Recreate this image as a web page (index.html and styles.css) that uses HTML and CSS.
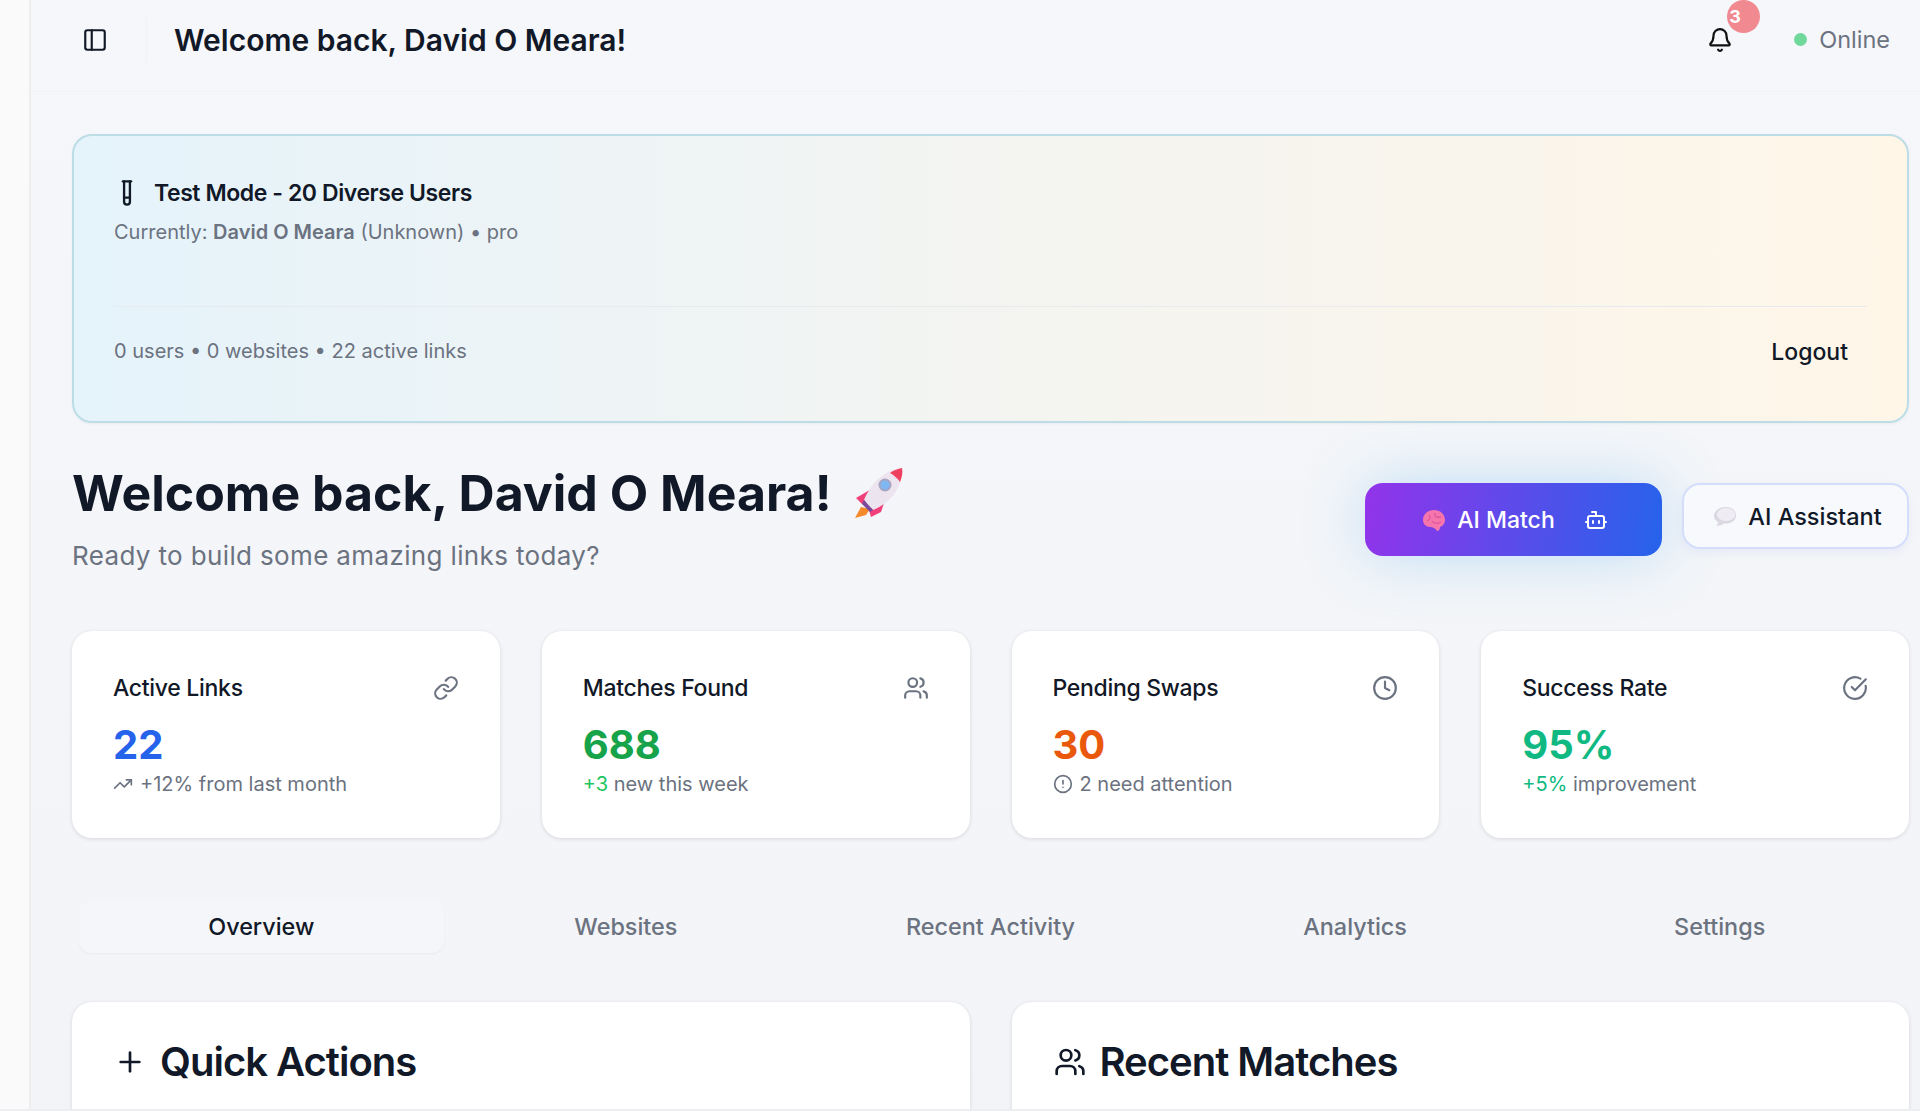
FILE: index.html
```html
<!DOCTYPE html>
<html lang="en">
<head>
    <meta charset="UTF-8">
    <meta name="viewport" content="width=device-width, initial-scale=1.0">
    <title>Dashboard</title>
    <link rel="stylesheet" href="styles.css">
</head>
<body>

    <div class="app">
        <div class="sidebar"></div>

        <div class="main">
            <div class="topbar">
                <svg class="icon toggle-icon" viewBox="0 0 24 24"><rect x="3" y="3" width="18" height="18" rx="2"/><path d="M9 3v18"/></svg>
                <div class="topbar-divider"></div>
                <div class="topbar-title">Welcome back, David O Meara!</div>
                <div class="bell">
                    <svg class="icon bell-icon" viewBox="0 0 24 24"><path d="M10.268 21a2 2 0 0 0 3.464 0"/><path d="M3.262 15.326A1 1 0 0 0 4 17h16a1 1 0 0 0 .74-1.673C19.41 13.956 18 12.499 18 8A6 6 0 0 0 6 8c0 4.499-1.411 5.956-2.738 7.326"/></svg>
                    <span class="bell-badge">3</span>
                </div>
                <div class="status">
                    <span class="status-dot"></span>
                    <span>Online</span>
                </div>
            </div>

            <div class="content">
                <div class="test-banner">
                    <div class="test-title">
                        <svg class="icon tube-icon" viewBox="0 0 24 24"><path d="M14.5 2v17.5c0 1.4-1.1 2.5-2.5 2.5c-1.4 0-2.5-1.1-2.5-2.5V2"/><path d="M8.5 2h7"/><path d="M14.5 16h-5"/></svg>
                        <span>Test Mode - 20 Diverse Users</span>
                    </div>
                    <div class="test-user">Currently: <strong>David O Meara</strong> (Unknown) • pro</div>
                    <div class="test-footer">
                        <span class="test-counts">0 users • 0 websites • 22 active links</span>
                        <span class="logout">Logout</span>
                    </div>
                </div>

                <div class="welcome">
                    <div class="welcome-text">
                        <h1>Welcome back, David O Meara!
                            <svg class="rocket" viewBox="0 0 54 54">
                                <path d="M9 41 L3 52 L14 49 L18 43 Z" fill="#f58a2c"/>
                                <path d="M21 22 L4 32 L10 38 L18 35 Z" fill="#f0407a"/>
                                <path d="M33 34 L29 46 L19 51 L17 44 L24 38 Z" fill="#f0407a"/>
                                <path d="M50 2 C36 3 20 14 12 34 L21 44 C40 36 51 20 50 2 Z" fill="#ece4ee"/>
                                <path d="M50 2 C46 3 42 4 38 7 C42 9 46 13 48 16 C50 11 51 6 50 2 Z" fill="#f0405f"/>
                                <path d="M12 34 L21 44 L18 46 L10 38 Z" fill="#7a4a9c"/>
                                <circle cx="33" cy="19" r="6.500" fill="#a9a4c4"/>
                                <circle cx="33" cy="19" r="4.500" fill="#7db8f2"/>
                            </svg>
                        </h1>
                        <p>Ready to build some amazing links today?</p>
                    </div>
                    <div class="welcome-actions">
                        <div class="btn-match">
                            <svg class="emoji-small" viewBox="0 0 24 24">
                                <path d="M12 2 C6 2 1 6 1 12 C1 16 4 19 8 19 C11 19 13 20 15 23 C17 23 18 21 18 19 C21 18 23 15 23 12 C23 6 18 2 12 2 Z" fill="#f775ad"/>
                                <path d="M7 7 C9 9 8 12 5 13 M13 5 C12 8 14 10 19 9 M10 13 C12 16 16 16 19 14" fill="none" stroke="#e0559a" stroke-width="1.300"/>
                            </svg>
                            <span>AI Match</span>
                            <svg class="icon bot-icon" viewBox="0 0 24 24"><path d="M12 8V4H8"/><rect x="4" y="8" width="16" height="12" rx="2"/><path d="M2 14h2"/><path d="M20 14h2"/><path d="M15 13v2"/><path d="M9 13v2"/></svg>
                        </div>
                        <div class="btn-assistant">
                            <svg class="emoji-small" viewBox="0 0 24 24">
                                <path d="M13 3 C6 3 1 7 1 12 C1 15 3 17 5 18 C5 20 4 21 3 22 C6 22 9 21 11 19.500 C18 20 23 17 23 11 C23 7 19 3 13 3 Z" fill="#dcd8e2"/>
                                <ellipse cx="13" cy="10.500" rx="9" ry="6.500" fill="#efedf3"/>
                            </svg>
                            <span>AI Assistant</span>
                        </div>
                    </div>
                </div>

                <div class="stats">
                    <div class="stat-card">
                        <div class="stat-head">
                            <span>Active Links</span>
                            <svg class="icon stat-icon" viewBox="0 0 24 24"><path d="M10 13a5 5 0 0 0 7.54.54l3-3a5 5 0 0 0-7.07-7.07l-1.72 1.71"/><path d="M14 11a5 5 0 0 0-7.54-.54l-3 3a5 5 0 0 0 7.07 7.07l1.71-1.71"/></svg>
                        </div>
                        <div class="stat-value blue">22</div>
                        <div class="stat-note">
                            <svg class="icon note-icon" viewBox="0 0 24 24"><polyline points="22 7 13.5 15.500 8.500 10.500 2 17"/><polyline points="16 7 22 7 22 13"/></svg>
                            <span>+12% from last month</span>
                        </div>
                    </div>
                    <div class="stat-card">
                        <div class="stat-head">
                            <span>Matches Found</span>
                            <svg class="icon stat-icon" viewBox="0 0 24 24"><path d="M16 21v-2a4 4 0 0 0-4-4H6a4 4 0 0 0-4 4v2"/><circle cx="9" cy="7" r="4"/><path d="M22 21v-2a4 4 0 0 0-3-3.870"/><path d="M16 3.130a4 4 0 0 1 0 7.750"/></svg>
                        </div>
                        <div class="stat-value green">688</div>
                        <div class="stat-note"><span><span class="up-green">+3</span> new this week</span></div>
                    </div>
                    <div class="stat-card">
                        <div class="stat-head">
                            <span>Pending Swaps</span>
                            <svg class="icon stat-icon" viewBox="0 0 24 24"><circle cx="12" cy="12" r="10"/><polyline points="12 6 12 12 16 14"/></svg>
                        </div>
                        <div class="stat-value orange">30</div>
                        <div class="stat-note">
                            <svg class="icon note-icon" viewBox="0 0 24 24"><circle cx="12" cy="12" r="10"/><path d="M12 8v4"/><path d="M12 16h.01"/></svg>
                            <span>2 need attention</span>
                        </div>
                    </div>
                    <div class="stat-card">
                        <div class="stat-head">
                            <span>Success Rate</span>
                            <svg class="icon stat-icon" viewBox="0 0 24 24"><path d="M21.801 10A10 10 0 1 1 17 3.335"/><path d="m9 11 3 3L22 4"/></svg>
                        </div>
                        <div class="stat-value teal">95%</div>
                        <div class="stat-note"><span><span class="up-teal">+5%</span> improvement</span></div>
                    </div>
                </div>

                <div class="tabs">
                    <div class="tab active">Overview</div>
                    <div class="tab">Websites</div>
                    <div class="tab">Recent Activity</div>
                    <div class="tab">Analytics</div>
                    <div class="tab">Settings</div>
                </div>

                <div class="panels">
                    <div class="panel">
                        <h2>
                            <svg class="icon panel-icon" viewBox="0 0 24 24"><path d="M5 12h14"/><path d="M12 5v14"/></svg>
                            Quick Actions
                        </h2>
                    </div>
                    <div class="panel">
                        <h2>
                            <svg class="icon panel-icon" viewBox="0 0 24 24"><path d="M16 21v-2a4 4 0 0 0-4-4H6a4 4 0 0 0-4 4v2"/><circle cx="9" cy="7" r="4"/><path d="M22 21v-2a4 4 0 0 0-3-3.870"/><path d="M16 3.130a4 4 0 0 1 0 7.750"/></svg>
                            Recent Matches
                        </h2>
                    </div>
                </div>
            </div>
        </div>
    </div>

</body>
</html>
```

FILE: styles.css
```css
html, body {
    margin: 0;
    height: 100%;
    overflow: hidden;
}

body {
    background: linear-gradient(180deg, #f6f7fa 0%, #f2f4f7 100%);
    font-family: 'Inter', 'Liberation Sans', sans-serif;
    color: #111827;
}

.app {
    display: flex;
    height: 1111px;
    box-sizing: border-box;
    border-bottom: 2px solid #eceef1;
    overflow: hidden;
}

.sidebar {
    width: 31px;
    flex-shrink: 0;
    background: #fafafa;
    border-right: 2px solid #eeeeef;
    box-sizing: border-box;
}

.main {
    flex: 1;
    min-width: 0;
}

.icon {
    fill: none;
    stroke: currentColor;
    stroke-width: 2;
    stroke-linecap: round;
    stroke-linejoin: round;
    flex-shrink: 0;
}

/* top bar */
.topbar {
    display: flex;
    align-items: center;
    height: 92px;
    box-sizing: border-box;
    padding-left: 51px;
    padding-right: 30px;
    padding-bottom: 12px;
    border-bottom: 1px solid #f1f3f6;
}

.toggle-icon {
    width: 26px;
    height: 26px;
    color: #111827;
}

.topbar-divider {
    width: 1px;
    height: 42px;
    margin-left: 38px;
    margin-right: 27px;
    background: #f0f2f5;
}

.topbar-title {
    flex: 1;
    font-size: 30px;
    font-weight: 600;
}

.bell {
    position: relative;
    display: flex;
    margin-right: 61px;
}

.bell-icon {
    width: 26px;
    height: 26px;
    color: #111;
}

.bell-badge {
    position: absolute;
    top: -27px;
    left: 20px;
    width: 33px;
    height: 33px;
    border-radius: 50%;
    background: #f08a90;
    color: #fff;
    font-size: 18px;
    font-weight: 700;
    line-height: 33px;
    padding-left: 2px;
    box-sizing: border-box;
}

.status {
    display: flex;
    align-items: center;
    gap: 12px;
    font-size: 23.5px;
    color: #6b7280;
}

.status-dot {
    width: 13px;
    height: 13px;
    border-radius: 50%;
    background: #6fd89a;
}

/* page content */
.content {
    padding: 42px 11px 0 41px;
}

.test-banner {
    height: 289px;
    box-sizing: border-box;
    padding: 41px 40px 0 40px;
    border: 2px solid #bcdde6;
    border-radius: 20px;
    background: linear-gradient(90deg, #e5f3fb 0%, #f2f4f2 45%, #fff6e8 100%);
    box-shadow: 0 1px 3px rgba(0, 0, 0, 0.05);
}

.test-title {
    display: flex;
    align-items: center;
    gap: 13px;
    font-size: 23px;
    font-weight: 600;
    letter-spacing: -0.42px;
    line-height: 32px;
}

.tube-icon {
    width: 28px;
    height: 28px;
    margin-left: -1px;
}

.test-user {
    margin-top: 9px;
    font-size: 20px;
    line-height: 28px;
    color: #6b7280;
}

.test-user strong {
    font-weight: 600;
}

.test-footer {
    display: flex;
    align-items: center;
    justify-content: space-between;
    margin-top: 60px;
    padding-top: 14px;
    height: 60px;
    border-top: 1px solid #e7eaee;
}

.test-counts {
    font-size: 20px;
    color: #6b7280;
}

.logout {
    margin-top: 2px;
    font-size: 23px;
    font-weight: 500;
    padding-right: 19px;
}

/* welcome */
.welcome {
    display: flex;
    justify-content: space-between;
    margin-top: 40px;
}

.welcome h1 {
    display: flex;
    align-items: center;
    gap: 20px;
    margin: 0;
    font-size: 50px;
    font-weight: 700;
    line-height: 60px;
}

.rocket {
    width: 54px;
    height: 54px;
}

.welcome p {
    margin: 17px 0 0;
    font-size: 26px;
    letter-spacing: 0.36px;
    line-height: 32px;
    color: #6b7280;
}

.welcome-actions {
    display: flex;
    align-items: flex-start;
    gap: 20px;
    padding-top: 20px;
}

.btn-match {
    display: flex;
    align-items: center;
    justify-content: center;
    gap: 11px;
    width: 297px;
    height: 73px;
    box-sizing: border-box;
    padding-left: 3px;
    border-radius: 18px;
    background: linear-gradient(100deg, #9333ea, #2563eb);
    box-shadow: 0 0 60px rgba(90, 175, 240, 0.35);
    color: #fff;
    font-size: 23px;
    font-weight: 500;
}

.emoji-small {
    width: 24px;
    height: 24px;
}

.bot-icon {
    width: 24px;
    height: 24px;
    margin-left: 18px;
}

.btn-assistant {
    display: flex;
    align-items: center;
    justify-content: center;
    gap: 11px;
    width: 227px;
    height: 66px;
    box-sizing: border-box;
    padding-left: 4px;
    border: 2px solid #d4defa;
    border-radius: 18px;
    background: #f7f9fc;
    box-shadow: 0 4px 10px rgba(90, 110, 220, 0.08);
    font-size: 23.5px;
    font-weight: 500;
}

/* stats */
.stats {
    display: grid;
    grid-template-columns: repeat(4, 1fr);
    gap: 42px;
    margin-top: 59px;
}

.stat-card {
    height: 207px;
    box-sizing: border-box;
    padding: 41px 41px 0;
    border-radius: 20px;
    background: #fff;
    box-shadow: 0 1px 4px rgba(0, 0, 0, 0.12);
}

.stat-head {
    display: flex;
    justify-content: space-between;
    align-items: center;
    font-size: 23px;
    font-weight: 500;
    letter-spacing: -0.3px;
    line-height: 32px;
}

.stat-icon {
    width: 26px;
    height: 26px;
    color: #6b7280;
}

.stat-value {
    margin-top: 16px;
    font-size: 40px;
    font-weight: 700;
    line-height: 50px;
}

.blue { color: #2563eb; }
.green { color: #16a34a; }
.orange { color: #ea580c; }
.teal { color: #10b981; }
.up-green { color: #22c55e; }
.up-teal { color: #10b981; }

.stat-note {
    display: flex;
    align-items: center;
    gap: 7px;
    font-size: 20px;
    line-height: 28px;
    color: #6b7280;
}

.note-icon {
    width: 20px;
    height: 20px;
}

/* tabs */
.tabs {
    display: grid;
    grid-template-columns: repeat(5, 1fr);
    margin-top: 55px;
    padding: 7px;
}

.tab {
    height: 53px;
    line-height: 53px;
    text-align: center;
    font-size: 23.4px;
    font-weight: 500;
    color: #6b7280;
    border-radius: 12px;
}

.tab.active {
    background: #f4f6f9;
    color: #111827;
    box-shadow: 0 1px 2px rgba(0, 0, 0, 0.05);
}

/* bottom panels */
.panels {
    display: grid;
    grid-template-columns: repeat(2, 1fr);
    gap: 42px;
    margin-top: 42px;
}

.panel {
    height: 300px;
    box-sizing: border-box;
    padding: 36px 42px 0;
    border-radius: 20px;
    background: #fff;
    box-shadow: 0 1px 4px rgba(0, 0, 0, 0.12);
}

.panel h2 {
    display: flex;
    align-items: center;
    gap: 14px;
    margin: 0;
    font-size: 40px;
    font-weight: 600;
    letter-spacing: -1px;
    line-height: 48px;
}

.panel-icon {
    width: 32px;
    height: 32px;
}
```
